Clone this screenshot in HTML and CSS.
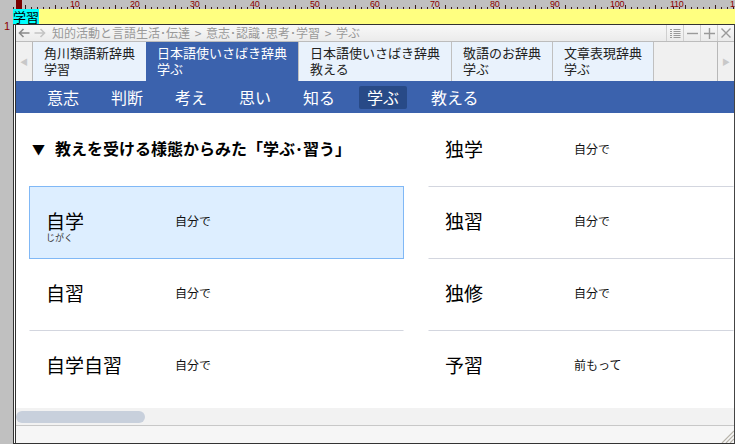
FILE: index.html
```html
<!DOCTYPE html>
<html lang="ja">
<head>
<meta charset="utf-8">
<title>学ぶ</title>
<link rel="stylesheet" href="styles.css">
</head>
<body>
<div class="app">
  <div class="corner"></div>
  <div class="ruler">
    <span class="mark"></span>
    <span class="num">10</span><span class="num">20</span><span class="num">30</span><span class="num">40</span><span class="num">50</span><span class="num">60</span><span class="num">70</span><span class="num">80</span><span class="num">90</span><span class="num">100</span><span class="num">110</span><span class="num">120</span>
  </div>
  <div class="gutter"><span class="lineno">1</span></div>
  <div class="main">
    <div class="editline"><span class="sel">学習</span></div>
    <div class="window">
      <div class="crumbbar">
        <div class="histnav">
          <svg class="back" width="12" height="10" viewBox="0 0 12 10"><path d="M11.5 5H1.5M5.5 1L1.5 5l4 4" fill="none" stroke="#8a8a8a" stroke-width="1.6"/></svg>
          <svg class="fwd" width="12" height="10" viewBox="0 0 12 10"><path d="M0.5 5h10M6.5 1l4 4-4 4" fill="none" stroke="#c4c4c4" stroke-width="1.6"/></svg>
        </div>
        <span class="crumbs">知的活動と言語生活･伝達 &gt; 意志･認識･思考･学習 &gt; 学ぶ</span>
        <div class="winbtns">
          <span class="wbtn"><svg width="11" height="9" viewBox="0 0 11 9"><path d="M0 0.5h2M0 4.5h2M0 8.5h2M3.5 0.5h7M3.5 4.5h7M3.5 8.5h7M0 2.5h2M3.5 2.5h7M0 6.5h2M3.5 6.5h7" stroke="#9a9a9a" stroke-width="1"/></svg></span>
          <span class="wbtn"><svg width="11" height="11" viewBox="0 0 11 11"><path d="M0 5.5h11" stroke="#9a9a9a" stroke-width="1.4"/></svg></span>
          <span class="wbtn"><svg width="11" height="11" viewBox="0 0 11 11"><path d="M0 5.5h11M5.5 0v11" stroke="#9a9a9a" stroke-width="1.4"/></svg></span>
          <span class="wbtn"><svg width="10" height="10" viewBox="0 0 10 10"><path d="M0.5 0.5l9 9M9.5 0.5l-9 9" stroke="#9a9a9a" stroke-width="1.4"/></svg></span>
        </div>
      </div>
      <div class="tabs">
        <span class="tabarrow left">◀</span>
        <div class="tab">角川類語新辞典<br>学習</div>
        <div class="tab active">日本語使いさばき辞典<br>学ぶ</div>
        <div class="tab sep">日本語使いさばき辞典<br>教える</div>
        <div class="tab sep">敬語のお辞典<br>学ぶ</div>
        <div class="tab sep">文章表現辞典<br>学ぶ</div>
        <div class="tabfill"></div>
        <span class="tabarrow right">▶</span>
      </div>
      <nav class="nav">
        <span class="navitem">意志</span>
        <span class="navitem">判断</span>
        <span class="navitem">考え</span>
        <span class="navitem">思い</span>
        <span class="navitem">知る</span>
        <span class="navitem on">学ぶ</span>
        <span class="navitem">教える</span>
      </nav>
      <div class="content">
        <div class="col left">
          <h2 class="heading"><span class="tri">▼</span>教えを受ける様態からみた「学ぶ･習う」</h2>
          <div class="entry card">
            <div class="word"><span class="w">自学</span><span class="ruby">じがく</span></div>
            <span class="gloss">自分で</span>
          </div>
          <div class="entry">
            <div class="word"><span class="w">自習</span></div>
            <span class="gloss">自分で</span>
          </div>
          <div class="entry last">
            <div class="word"><span class="w">自学自習</span></div>
            <span class="gloss">自分で</span>
          </div>
        </div>
        <div class="col right">
          <div class="entry">
            <div class="word"><span class="w">独学</span></div>
            <span class="gloss">自分で</span>
          </div>
          <div class="entry">
            <div class="word"><span class="w">独習</span></div>
            <span class="gloss">自分で</span>
          </div>
          <div class="entry">
            <div class="word"><span class="w">独修</span></div>
            <span class="gloss">自分で</span>
          </div>
          <div class="entry last">
            <div class="word"><span class="w">予習</span></div>
            <span class="gloss">前もって</span>
          </div>
        </div>
      </div>
      <div class="hscroll"><div class="thumb"></div></div>
      <div class="status">
        <svg class="grip" width="13" height="13" viewBox="0 0 13 13"><path d="M13 1L1 13M13 5L5 13M13 9L9 13" stroke="#b8b4aa" stroke-width="1.2"/></svg>
      </div>
    </div>
  </div>
</div>
</body>
</html>
```

FILE: styles.css
```css
* { box-sizing: border-box; margin: 0; padding: 0; }

html, body {
  width: 735px;
  height: 444px;
  overflow: hidden;
}

body {
  background: #c0c0c0;
  font-family: "Noto Sans CJK JP", "Noto Sans", sans-serif;
  color: #111;
}

.app {
  display: grid;
  grid-template-columns: 13px 722px;
  grid-template-rows: 9px 435px;
  height: 444px;
}

.corner { background: #c0c0c0; }

.ruler {
  position: relative;
  display: flex;
  padding-left: 57px;
  overflow: hidden;
  background-color: #c0c0c0;
  background-image:
    repeating-linear-gradient(to right, #3a1a1a 0 1px, transparent 1px 6px),
    repeating-linear-gradient(to right, #3a1a1a 0 1px, transparent 1px 30px);
  background-size: 100% 2px, 100% 4px;
  background-position: 0 100%, 12px 100%;
  background-repeat: no-repeat;
}

.mark {
  position: absolute;
  left: 3px;
  top: 0;
  width: 6px;
  height: 9px;
  background: #7a0000;
}

.num {
  flex: none;
  width: 60px;
  height: 9px;
  font-family: "Liberation Sans", sans-serif;
  font-size: 9px;
  line-height: 9px;
  color: #8b0000;
  letter-spacing: -0.3px;
}

.gutter {
  background: #c0c0c0;
  padding: 2px 0 0 4px;
}

.lineno {
  font-family: "Liberation Sans", sans-serif;
  font-size: 11px;
  line-height: 12px;
  color: #8b0000;
}

.main {
  display: flex;
  flex-direction: column;
  min-height: 0;
}

.editline {
  height: 15px;
  background: #ffff80;
  display: flex;
}

.sel {
  background: #00ffff;
  font-size: 13px;
  line-height: 15px;
  color: #000;
}

.window {
  flex: 1;
  display: flex;
  flex-direction: column;
  min-height: 0;
  background: #fff;
  border-left: 3px double #333;
  border-top: 1px solid #333;
  border-right: 1px solid #444;
  border-bottom: 1px solid #333;
  overflow: hidden;
}

/* breadcrumb */
.crumbbar {
  flex: none;
  height: 17px;
  display: flex;
  align-items: center;
  border-bottom: 1px solid #bcbcbc;
  background: linear-gradient(#f8f8f8, #ebebeb);
}

.histnav {
  display: flex;
  align-items: center;
  gap: 4px;
  padding-left: 2px;
  width: 36px;
  flex: none;
}

.crumbs {
  font-size: 12px;
  line-height: 16px;
  color: #999;
  white-space: pre;
  word-spacing: 2px;
}

.winbtns {
  margin-left: auto;
  display: flex;
  height: 16px;
}

.wbtn {
  width: 17px;
  height: 16px;
  border-left: 1px solid #cfcfcf;
  display: flex;
  align-items: center;
  justify-content: center;
}

/* tabs */
.tabs {
  flex: none;
  height: 39px;
  display: flex;
  background: #f0f0f0;
}

.tabarrow {
  flex: none;
  width: 17px;
  display: flex;
  align-items: center;
  justify-content: center;
  font-size: 8px;
  color: #c8c8c8;
  background: #f0f0f0;
}

.tabarrow.left { border-right: 1px solid #b8b8b8; }
.tabarrow.right { border-left: 1px solid #b8b8b8; }

.tab {
  flex: none;
  padding: 3px 11px 0;
  font-size: 13px;
  line-height: 16px;
  color: #222;
  background: #e9f2fc;
  white-space: nowrap;
}

.tab.sep { border-left: 1px solid #c0c0c0; }

.tab.active {
  background: #3b62ad;
  color: #fff;
}

.tabfill {
  flex: 1;
  border-left: 1px solid #c0c0c0;
  background: #f0f0f0;
}

/* nav */
.nav {
  flex: none;
  height: 32px;
  display: flex;
  align-items: center;
  gap: 16px;
  padding-left: 23px;
  background: #3b62ad;
}

.navitem {
  height: 23px;
  padding: 0 8px;
  font-size: 16px;
  line-height: 22px;
  color: #fff;
  border-radius: 2px;
}

.navitem.on { background: #284a87; }

/* content */
.content {
  flex: 1;
  min-height: 0;
  display: flex;
  gap: 24px;
  padding: 2px 0 0 13px;
  overflow: hidden;
  background: #fff;
}

.col {
  flex: none;
  display: flex;
  flex-direction: column;
}

.col.left { width: 375px; }
.col.right { width: 306px; }

.heading {
  height: 71px;
  display: flex;
  align-items: center;
  padding: 0 0 5px 3px;
  font-size: 16px;
  font-weight: 700;
  color: #000;
  white-space: nowrap;
}

.tri {
  width: 23px;
  font-size: 13px;
}

.entry {
  flex: none;
  height: 72px;
  display: flex;
  align-items: center;
  padding: 0 0 4px 16px;
  border-left: 1px solid transparent;
  border-right: 1px solid transparent;
  border-bottom: 1px solid #d3d6df;
}

.entry.last { border-bottom-color: transparent; }

.entry.card {
  height: 73px;
  background: #ddeeff;
  border: 1px solid #80b8f6;
}

.word {
  width: 129px;
  flex: none;
  display: flex;
  flex-direction: column;
}

.w {
  font-size: 19px;
  line-height: 24px;
  color: #000;
}

.ruby {
  font-size: 9px;
  line-height: 10px;
  height: 10px;
  margin-bottom: -10px;
  color: #333;
}

.gloss {
  font-size: 12px;
  line-height: 16px;
  color: #111;
}

/* scrollbar + status */
.hscroll {
  flex: none;
  height: 17px;
  padding-top: 3px;
  background: #f2f2f2;
}

.thumb {
  width: 129px;
  height: 12px;
  border-radius: 6px;
  background: #c8d0dc;
}

.status {
  flex: none;
  height: 18px;
  border-top: 1px solid #c8c8c8;
  background: #f6f6f6;
  display: flex;
  justify-content: flex-end;
  align-items: flex-end;
}

.grip { display: block; }
```
